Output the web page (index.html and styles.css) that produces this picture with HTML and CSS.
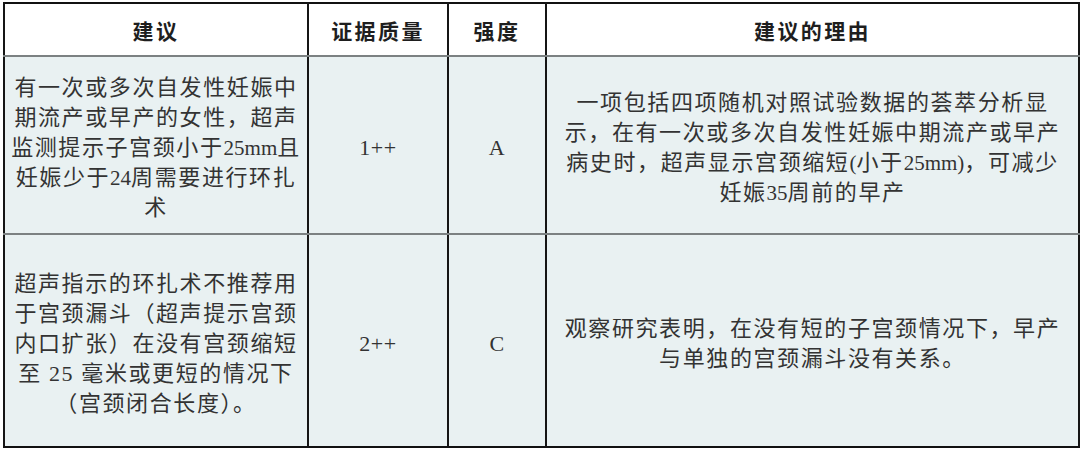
FILE: index.html
```html
<!DOCTYPE html>
<html lang="zh-CN">
<head>
<meta charset="utf-8">
<title>建议</title>
<link rel="stylesheet" href="styles.css">
</head>
<body>
<table class="rec-table">
  <colgroup>
    <col class="c-rec">
    <col class="c-quality">
    <col class="c-grade">
    <col class="c-reason">
  </colgroup>
  <thead>
    <tr class="head-row">
      <th>建议</th>
      <th>证据质量</th>
      <th>强度</th>
      <th>建议的理由</th>
    </tr>
  </thead>
  <tbody>
    <tr class="row-1">
      <td class="cell-rec">有一次或多次自发性妊娠中期流产或早产的女性，超声监测提示子宫颈小于<span class="lat">25mm</span>且妊娠少于<span class="lat">24</span>周需要进行环扎术</td>
      <td class="cell-mid">1++</td>
      <td class="cell-mid">A</td>
      <td class="cell-reason">一项包括四项随机对照试验数据的荟萃分析显示，在有一次或多次自发性妊娠中期流产或早产病史时，超声显示宫颈缩短<span class="lat">(</span>小于<span class="lat">25mm)</span>，可减少妊娠<span class="lat">35</span>周前的早产</td>
    </tr>
    <tr class="row-2">
      <td class="cell-rec">超声指示的环扎术不推荐用于宫颈漏斗（超声提示宫颈内口扩张）在没有宫颈缩短至 25 毫米或更短的情况下（宫颈闭合长度）。</td>
      <td class="cell-mid">2++</td>
      <td class="cell-mid">C</td>
      <td class="cell-reason">观察研究表明，在没有短的子宫颈情况下，早产与单独的宫颈漏斗没有关系。</td>
    </tr>
  </tbody>
</table>
</body>
</html>
```

FILE: styles.css
```css
html, body {
  margin: 0;
  padding: 0;
  background: #ffffff;
}

body {
  padding: 2px 0 0 3px;
}

.rec-table {
  border-collapse: collapse;
  table-layout: fixed;
  width: 1075px;
  border: 2px solid #111111;
}

.c-rec { width: 304px; }
.c-quality { width: 140px; }
.c-grade { width: 98px; }
.c-reason { width: 533px; }

.rec-table th,
.rec-table td {
  border-left: 2px solid #151515;
  border-right: 2px solid #151515;
  text-align: center;
  vertical-align: middle;
}

.rec-table th {
  height: 51px;
  padding: 0;
  font-family: "Noto Sans CJK SC", "Noto Sans", sans-serif;
  font-weight: 700;
  font-size: 21px;
  letter-spacing: 2.4px;
  color: #1e1e1e;
  background: #ffffff;
  border-bottom: 2px solid #7c8182;
}

.rec-table td {
  padding: 6px 4px 0;
  font-family: "Liberation Serif", "Noto Sans CJK SC", serif;
  font-size: 22px;
  line-height: 30px;
  letter-spacing: 1.6px;
  color: #333333;
  background: #e9f1f2;
}

.lat {
  font-size: 21px;
  letter-spacing: 0;
  line-height: 1;
}

.row-1 td {
  height: 170px;
  border-bottom: 2px solid #7c8182;
}

.row-2 td {
  height: 205px;
  border-bottom: 2px solid #111111;
}

.rec-table td.cell-reason {
  padding: 6px 12px 0;
}

.rec-table td.cell-mid {
  letter-spacing: 0.5px;
}
```
